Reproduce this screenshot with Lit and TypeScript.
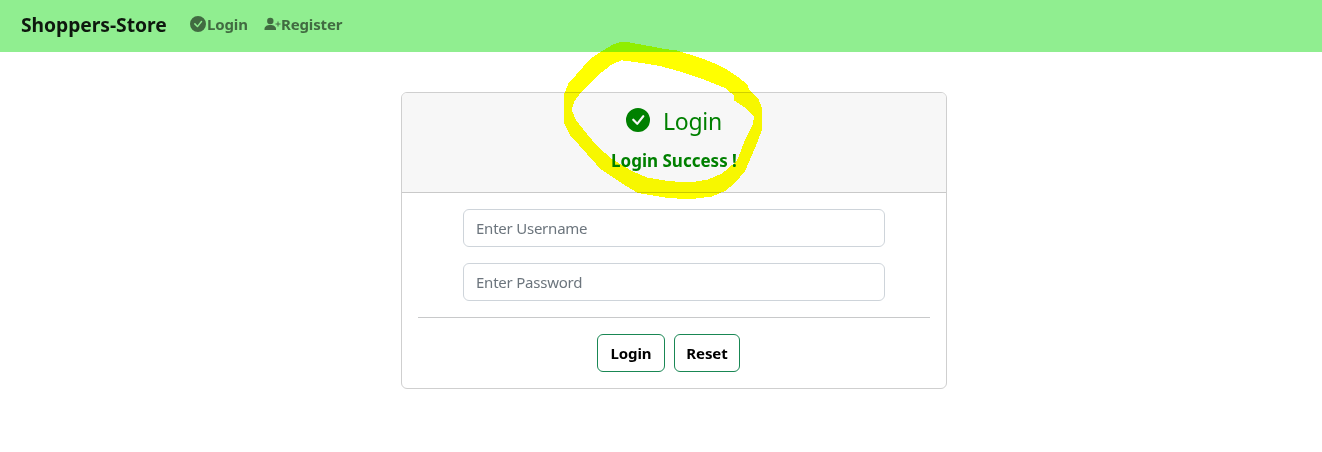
import { LitElement, html, css, svg } from "lit";
import { customElement } from "lit/decorators.js";

const checkPath =
  "M16 8A8 8 0 1 1 0 8a8 8 0 0 1 16 0zm-3.97-3.03a.75.75 0 0 0-1.08.022L7.477 9.417 5.384 7.323a.75.75 0 0 0-1.06 1.06L6.97 11.03a.75.75 0 0 0 1.079-.02l3.992-4.99a.75.75 0 0 0-.01-1.05z";

const checkIcon = (cls: string) => html`
  <svg class=${cls} viewBox="0 0 16 16" fill="currentColor">${svg`<path d=${checkPath} />`}</svg>`;

@customElement("app-root")
export class AppRoot extends LitElement {
  static styles = css`
    :host {
      display: block;
      position: relative;
      height: 452px;
      overflow: hidden;
      background: #fff;
      color: #212529;
      font: 15.5px/24px "Noto Sans", "Open Sans", sans-serif;
    }
    * { box-sizing: border-box; }
    svg { display: block; flex: none; }
    nav {
      display: flex;
      align-items: center;
      height: 52px;
      padding: 0 21px 2px;
      background: #90ee90;
      font-weight: 700;
      white-space: nowrap;
    }
    .brand {
      width: 145px;
      margin-right: 24px;
      font-size: 19.3px;
      line-height: 30px;
      color: rgba(0, 0, 0, 0.9);
      letter-spacing: -0.05px;
    }
    .link { display: flex; align-items: center; height: 24px; margin-top: -2px; color: #416b41; font-size: 15px; letter-spacing: -0.15px; }
    .login { width: 74px; }
    .small { width: 16px; height: 16px; margin-right: 1px; }
    .person { width: 17px; height: 16px; }
    .card {
      width: 546px;
      height: 297px;
      margin: 40px 0 0 401px;
      border: 1px solid #cfcfcf;
      border-radius: 6px;
      overflow: hidden;
    }
    header {
      height: 100px;
      padding-top: 12px;
      background: #f7f7f7;
      border-bottom: 1px solid #c9c9c9;
      color: green;
    }
    .title { display: flex; align-items: center; justify-content: center; height: 30px; }
    .big { width: 24px; height: 24px; margin-right: 13px; }
    .heading { padding-top: 1px; font-size: 23px; font-weight: 400; line-height: 30px; letter-spacing: -0.3px; }
    .message { margin-top: 14px; text-align: center; font-size: 17px; font-weight: 700; line-height: 24px; letter-spacing: 0; }
    form { padding: 16px; }
    input {
      display: block;
      width: 422px;
      height: 38px;
      margin: 0 0 16px 45px;
      padding: 0 12px;
      border: 1px solid #ced4da;
      border-radius: 6px;
      background: #fff;
      font: inherit;
      font-size: 15px;
      letter-spacing: -0.23px;
      outline: none;
    }
    input::placeholder { color: #6c757d; opacity: 1; }
    hr { height: 1px; margin: 0 0 16px; border: 0; background: #c8c9ca; }
    .actions { display: flex; gap: 9px; padding-left: 179px; }
    button {
      height: 38px;
      padding: 0;
      border: 1px solid #198754;
      border-radius: 6px;
      background: #fff;
      color: #000;
      font: inherit;
      font-size: 15px;
      font-weight: 700;
      letter-spacing: -0.1px;
    }
    .submit { width: 68px; }
    .reset { width: 66px; }
    .marker {
      position: absolute;
      left: 0;
      top: 0;
      mix-blend-mode: multiply;
      pointer-events: none;
    }
  `;

  render() {
    return html`
      <nav>
        <span class="brand">Shoppers-Store</span>
        <a class="link login">${checkIcon("small")}<span>Login</span></a>
        <a class="link register">
          <svg class="person" viewBox="0 0 17 16" fill="currentColor">
            <circle cx="6.3" cy="5" r="3.2" />
            <path d="M.5 14v-1C.5 10.500 3 9 6.300 9S12 10.500 12 13v1z" />
            <path d="M13.500 5.500h1v2h2v1h-2v2h-1v-2h-2v-1h2z" />
          </svg><span>Register</span></a>
      </nav>
      <section class="card">
        <header>
          <div class="title">${checkIcon("big")}<span class="heading">Login</span></div>
          <div class="message">Login Success !</div>
        </header>
        <form>
          <input type="text" placeholder="Enter Username" />
          <input type="password" placeholder="Enter Password" />
          <hr />
          <div class="actions">
            <button class="submit" type="button">Login</button>
            <button class="reset" type="button">Reset</button>
          </div>
        </form>
      </section>
      <svg class="marker" width="1322" height="452" viewBox="0 0 1322 452" shape-rendering="crispEdges">
        <path fill="#ff0" fill-rule="evenodd" d="M590 59L602 51 613 44.500 620 42 627 42 649 46 665 49 677 50.500 702 58.500 716 64 727 69.500 738 77 748 85 749 90 758 98 762 108 762 130 755 148 745 171 735 183 725 191 712 196.500 688 199.500 665 197.500 638 193 622 183.500 600 168.500 583 149.500 570 135 564 123 564 94.500 568.500 83.500ZM622 60.300L612 64.300 597 76 580 93.500 574 102 571.700 110 576 120 585 131.700 598 147 612 159 632 171 647 177.500 665 180.500 680 182 693 182 708 179.500 722 173.500 737 160.700 745 140 753 124 754 116 745 107.500 733.500 100 733.500 95 725 88 701 78.500 680 71.500 660 66 645 63.500Z" />
      </svg>
    `;
  }
}
